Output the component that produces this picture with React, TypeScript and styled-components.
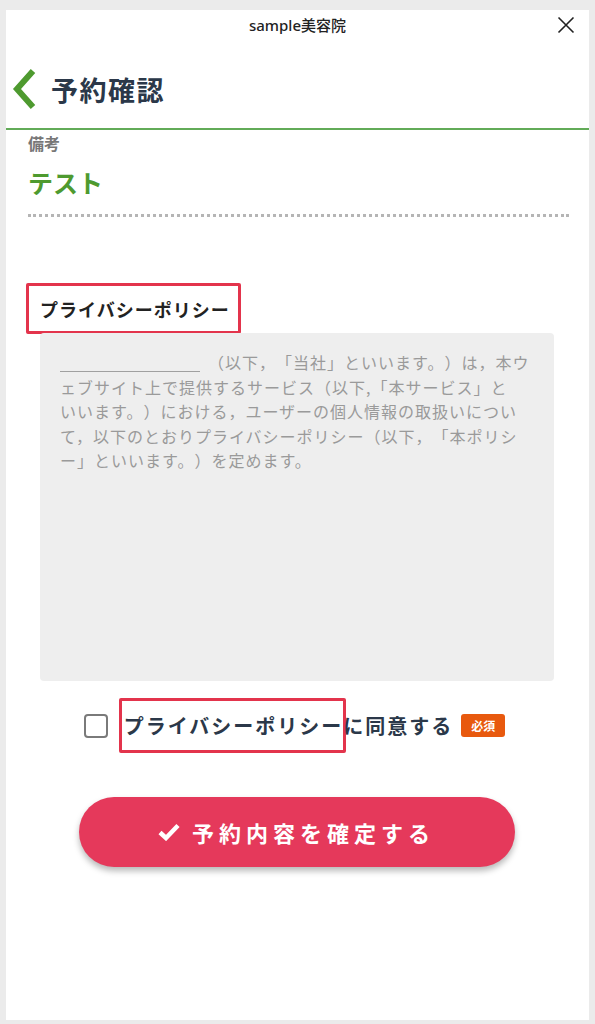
import styled, { createGlobalStyle } from "styled-components";

const GlobalStyle = createGlobalStyle`
  html, body {
    margin: 0;
    padding: 0;
    background: #ebebeb;
  }
  body {
    font-family: "Noto Sans CJK JP", "Noto Sans", sans-serif;
  }
`

const Frame = styled.div`
  padding: 10px 6px 4px 6px;
`

const Panel = styled.div`
  background: #ffffff;
  min-height: 1010px;
  display: flex;
  flex-direction: column;
`

const TopBar = styled.div`
  display: grid;
  grid-template-columns: 1fr auto 1fr;
  align-items: center;
  height: 30px;
  padding: 0 14px;
`

const ShopName = styled.div`
  grid-column: 2;
  font-size: 15px;
  font-weight: 500;
  color: #222;
  margin-top: -2px;
  font-family: "Noto Sans", "Noto Sans CJK JP", sans-serif;
`

const CloseButton = styled.button`
  justify-self: end;
  border: none;
  background: none;
  padding: 0;
  display: flex;
  color: #222;
  cursor: pointer;
`

const Header = styled.div`
  display: flex;
  align-items: center;
  gap: 13px;
  height: 90px;
  box-sizing: border-box;
  padding: 10px 0 0 4px;
  border-bottom: 2px solid #62ab58;
`

const BackButton = styled.button`
  border: none;
  background: none;
  padding: 0;
  display: flex;
  cursor: pointer;
`

const PageTitle = styled.h1`
  margin: 0;
  font-size: 27px;
  font-weight: 700;
  color: #2b3849;
  letter-spacing: 1.5px;
`

const Content = styled.div`
  padding: 0 20px 0 22px;
  display: flex;
  flex-direction: column;
`

const FieldLabel = styled.div`
  font-size: 16px;
  font-weight: 700;
  color: #777;
  line-height: 20px;
  margin-top: 3px;
`

const FieldValue = styled.div`
  font-size: 25px;
  font-weight: 700;
  color: #4e9a2f;
  line-height: 34px;
  margin-top: 12px;
`

const Dotted = styled.div`
  border-top: 3px dotted #b5b5b5;
  margin-top: 15px;
`

const Annotated = styled.span`
  display: inline-block;
  border: 3px solid #e3344c;
  border-radius: 2px;
`

const SectionTitle = styled(Annotated)`
  align-self: flex-start;
  margin: 66px 0 0 -2px;
  padding: 11px 8px 10px 11px;
  font-size: 18px;
  font-weight: 700;
  color: #222;
  letter-spacing: 1px;
  line-height: 24px;
`

const PolicyBox = styled.div`
  margin: -1px 15px 0 12px;
  background: #eeeeee;
  border-radius: 4px;
  height: 348px;
  box-sizing: border-box;
  padding: 17px 10px 0 20px;
  font-size: 16px;
  line-height: 24.5px;
  letter-spacing: 1px;
  color: #9a9a9a;
  white-space: nowrap;
  text-spacing-trim: space-all;
`

const Blank = styled.span`
  display: inline-block;
  width: 140px;
  height: 15px;
  border-bottom: 1px solid #a0a0a0;
  vertical-align: -3px;
  margin-right: 8px;
`

const AgreeRow = styled.label`
  display: flex;
  align-items: center;
  justify-content: center;
  margin-top: 17px;
  padding-right: 8px;
  font-size: 20px;
  font-weight: 700;
  color: #2b3849;
  letter-spacing: 2px;
  cursor: pointer;
`

const Checkbox = styled.span`
  width: 20px;
  height: 20px;
  border: 2px solid #7a7a7a;
  border-radius: 4px;
  margin-right: 11px;
`

const Highlight = styled(Annotated)`
  padding: 10px 0 10px 2px;
  margin-right: -3px;
`

const Badge = styled.span`
  margin-left: 8px;
  background: #e8590e;
  color: #fff;
  font-size: 12px;
  font-weight: 700;
  line-height: 16px;
  padding: 4px 10px 3px;
  border-radius: 3px;
  letter-spacing: 0;
`

const SubmitButton = styled.button`
  align-self: center;
  margin: 44px 0 0 -4px;
  width: 436px;
  height: 70px;
  border: none;
  border-radius: 35px;
  background: #e5395b;
  box-shadow: 0 4px 6px rgba(0, 0, 0, 0.28);
  color: #fff;
  font-family: inherit;
  font-size: 22px;
  font-weight: 700;
  letter-spacing: 5px;
  display: flex;
  align-items: center;
  justify-content: center;
  gap: 12px;
  cursor: pointer;
`

export default function App() {
    return (
        <>
            <GlobalStyle/>
            <Frame>
                <Panel>
                    <TopBar>
                        <ShopName>sample美容院</ShopName>
                        <CloseButton aria-label="閉じる">
                            <svg width="18" height="18" viewBox="0 0 18 18">
                                <path d="M1.5 1.5 L16.5 16.5 M16.5 1.5 L1.5 16.5" stroke="#222" strokeWidth="1.6" fill="none"/>
                            </svg>
                        </CloseButton>
                    </TopBar>
                    <Header>
                        <BackButton aria-label="戻る">
                            <svg width="28" height="42" viewBox="0 0 28 42">
                                <path d="M23 3 L7 21 L23 39" stroke="#4e9a2f" strokeWidth="6" fill="none"/>
                            </svg>
                        </BackButton>
                        <PageTitle>予約確認</PageTitle>
                    </Header>
                    <Content>
                        <FieldLabel>備考</FieldLabel>
                        <FieldValue>テスト</FieldValue>
                        <Dotted/>
                        <SectionTitle>プライバシーポリシー</SectionTitle>
                        <PolicyBox>
                            <Blank/>（以下，「当社」といいます。）は，本ウ<br/>
                            ェブサイト上で提供するサービス（以下,「本サービス」と<br/>
                            いいます。）における，ユーザーの個人情報の取扱いについ<br/>
                            て，以下のとおりプライバシーポリシー（以下，「本ポリシ<br/>
                            ー」といいます。）を定めます。
                        </PolicyBox>
                        <AgreeRow>
                            <Checkbox/>
                            <Highlight>プライバシーポリシー</Highlight>に同意する
                            <Badge>必須</Badge>
                        </AgreeRow>
                        <SubmitButton>
                            <svg width="22" height="18" viewBox="0 0 22 18">
                                <path d="M2 9.5 L8 15 L20 2.5" stroke="#fff" strokeWidth="4.5" fill="none"/>
                            </svg>
                            予約内容を確定する
                        </SubmitButton>
                    </Content>
                </Panel>
            </Frame>
        </>
    );
}
